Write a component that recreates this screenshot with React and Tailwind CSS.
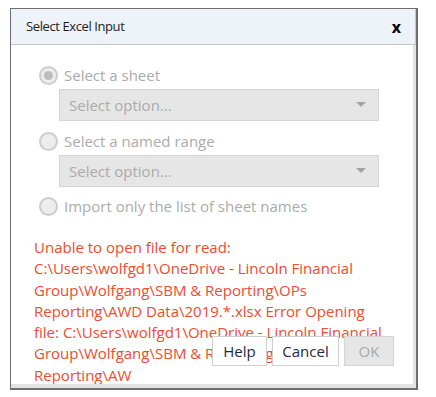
import React from "react";

const font = { fontFamily: '"Segoe UI", "Open Sans", "Noto Sans", sans-serif' };

function Radio({ checked, label }) {
    return (
        <div className="flex items-center h-[22px] ml-[5px]">
            <span className="flex items-center justify-center w-[19px] h-[19px] rounded-full border-2 border-[#cdcdcd] bg-[#ededed]">
                {checked && <span className="w-[9px] h-[9px] rounded-full bg-[#bcbcbc]"></span>}
            </span>
            <span className="ml-[6px] text-[15px] text-[#ababab] leading-none">{label}</span>
        </div>
    );
}

function SelectBox() {
    return (
        <div className="ml-[25px] w-[320px] h-[32px] flex items-center justify-between pl-[9px] pr-[10px] bg-[#e6e6e6] border border-[#d5d5d5]">
            <span className="text-[15px] text-[#ababab]">Select option...</span>
            <svg width="10" height="6" viewBox="0 0 10 6" className="mr-[2px]">
                <path d="M0 0H10L5 5Z" fill="#a3a3a3" />
            </svg>
        </div>
    );
}

export default function App() {
    const lines = [
        "Unable to open file for read:",
        "C:\\Users\\wolfgd1\\OneDrive - Lincoln Financial",
        "Group\\Wolfgang\\SBM & Reporting\\OPs",
        "Reporting\\AWD Data\\2019.*.xlsx Error Opening",
        "file: C:\\Users\\wolfgd1\\OneDrive - Lincoln Financial",
        "Group\\Wolfgang\\SBM & Reporting\\OPs",
        "Reporting\\AW",
    ];

    return (
        <div className="w-[436px] h-[397px] bg-white pt-[8px] pl-[10px]" style={font}>
            <div className="w-[408px] h-[382px] flex flex-col border border-[#6e6e6e] border-r-2 border-b-2 bg-white">
                <div className="h-[36px] shrink-0 flex items-center justify-between pl-[15px] pr-[14px] bg-[#eef2f9] border-b border-r border-[#c6c6c6]">
                    <span className="text-[13px] tracking-[-0.4px] text-[#222]">Select Excel Input</span>
                    <span className="text-[16px] font-bold text-black leading-none">x</span>
                </div>
                <div className="relative flex-1 overflow-hidden border-r-[3px] border-b-[4px] border-[#e3e3e3] pl-[23px] pt-[19px]">
                    <Radio checked label="Select a sheet" />
                    <div className="mt-[3px]">
                        <SelectBox />
                    </div>
                    <div className="mt-[9px]">
                        <Radio label="Select a named range" />
                    </div>
                    <div className="mt-[3px]">
                        <SelectBox />
                    </div>
                    <div className="mt-[8px]">
                        <Radio label="Import only the list of sheet names" />
                    </div>
                    <div className="mt-[20px] text-[15px] leading-[21.3px] text-[#ee4b30]">
                        {lines.map((l, i) => (
                            <div key={i} className="whitespace-nowrap">{l}</div>
                        ))}
                    </div>
                    <div className="absolute left-[201px] top-[291px] flex gap-[5px]">
                        <button className="w-[55px] h-[30px] bg-white border border-[#d0d0d0] text-[15px] text-[#1d2a44]">Help</button>
                        <button className="w-[67px] h-[30px] bg-white border border-[#d0d0d0] text-[15px] text-[#1d2a44]">Cancel</button>
                        <button className="w-[50px] h-[30px] bg-[#e6e6e6] border border-[#d5d5d5] text-[15px] text-[#a9a9a9]">OK</button>
                    </div>
                </div>
            </div>
        </div>
    );
}
